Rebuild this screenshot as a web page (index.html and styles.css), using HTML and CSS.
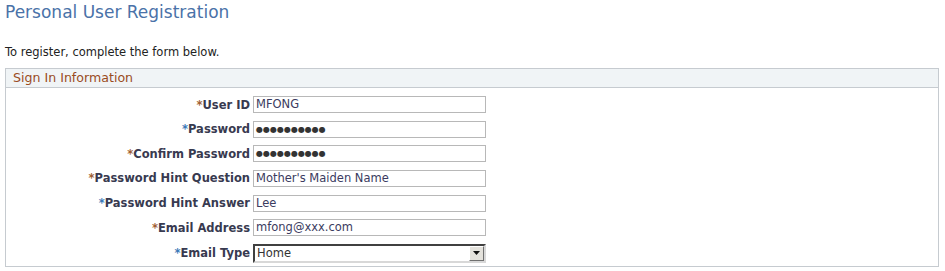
FILE: index.html
```html
<!DOCTYPE html>
<html>
<head>
<meta charset="utf-8">
<link rel="stylesheet" href="styles.css">
</head>
<body>
<div class="page">
  <h1 class="title">Personal User Registration</h1>
  <p class="intro">To register, complete the form below.</p>
  <div class="group">
    <div class="group-head">Sign In Information</div>
    <div class="form">
      <div class="row"><label class="lbl"><span class="req brown">*</span>User ID</label><div class="field">MFONG</div></div>
      <div class="row"><label class="lbl"><span class="req blue">*</span>Password</label><div class="field dots">●●●●●●●●●●</div></div>
      <div class="row"><label class="lbl"><span class="req brown">*</span>Confirm Password</label><div class="field dots">●●●●●●●●●●</div></div>
      <div class="row"><label class="lbl"><span class="req brown">*</span>Password Hint Question</label><div class="field">Mother's Maiden Name</div></div>
      <div class="row"><label class="lbl"><span class="req blue">*</span>Password Hint Answer</label><div class="field">Lee</div></div>
      <div class="row"><label class="lbl"><span class="req brown">*</span>Email Address</label><div class="field">mfong@xxx.com</div></div>
      <div class="row row-sel"><label class="lbl"><span class="req blue">*</span>Email Type</label>
        <div class="select"><span class="sel-text">Home</span><span class="sel-btn"><svg width="7" height="4" viewBox="0 0 7 4"><path d="M0 0H7L3.5 4Z" fill="#111"/></svg></span></div>
      </div>
    </div>
  </div>
</div>
</body>
</html>
```
FILE: styles.css
```css
html, body { margin: 0; padding: 0; background: #fff; }
body { font-family: "DejaVu Sans", Verdana, sans-serif; font-size: 11px; color: #333; }
.page { padding: 0 6px 0 5px; }
.title { margin: 0; padding-top: 1px; font-size: 17px; font-weight: normal; color: #4a72a8; line-height: 22px; }
.intro { margin: 21px 0 0 0; line-height: 16px; font-size: 11.5px; color: #222; }
.group { margin-top: 8px; border: 1px solid #c6cbd0; }
.group-head { height: 18px; line-height: 18px; background: #f0f4f6; border-bottom: 1px solid #c6cbd0; padding-left: 7px; font-size: 12.6px; color: #9a4c1e; }
.form { padding: 8px 0 3px 0; display: flex; flex-direction: column; gap: 7.67px; }
.row { display: flex; align-items: center; height: 17px; }
.row-sel { height: 19px; }
.lbl { width: 247px; text-align: right; font-weight: bold; font-size: 11.5px; color: #383a50; padding-right: 3px; box-sizing: border-box; flex: none; }
.req { font-weight: bold; }
.brown { color: #a05f34; }
.blue { color: #3c7ab8; }
.field { width: 233px; height: 17px; box-sizing: border-box; border: 1px solid #b8b8b8; padding: 0 2px; line-height: 15px; color: #3b3b60; font-size: 11.5px; }
.dots { font-size: 8px; color: #333; }
.select { width: 233px; height: 19px; box-sizing: border-box; border: 2px solid; border-color: #404040 #d8d8d8 #d8d8d8 #404040; display: flex; align-items: center; justify-content: space-between; }
.sel-text { padding-left: 2px; color: #333; font-size: 11.5px; }
.sel-btn { width: 15px; height: 15px; box-sizing: border-box; background: #e4e2dc; border: 1px solid; border-color: #fff #707070 #707070 #fff; display: flex; align-items: center; justify-content: center; }
```
